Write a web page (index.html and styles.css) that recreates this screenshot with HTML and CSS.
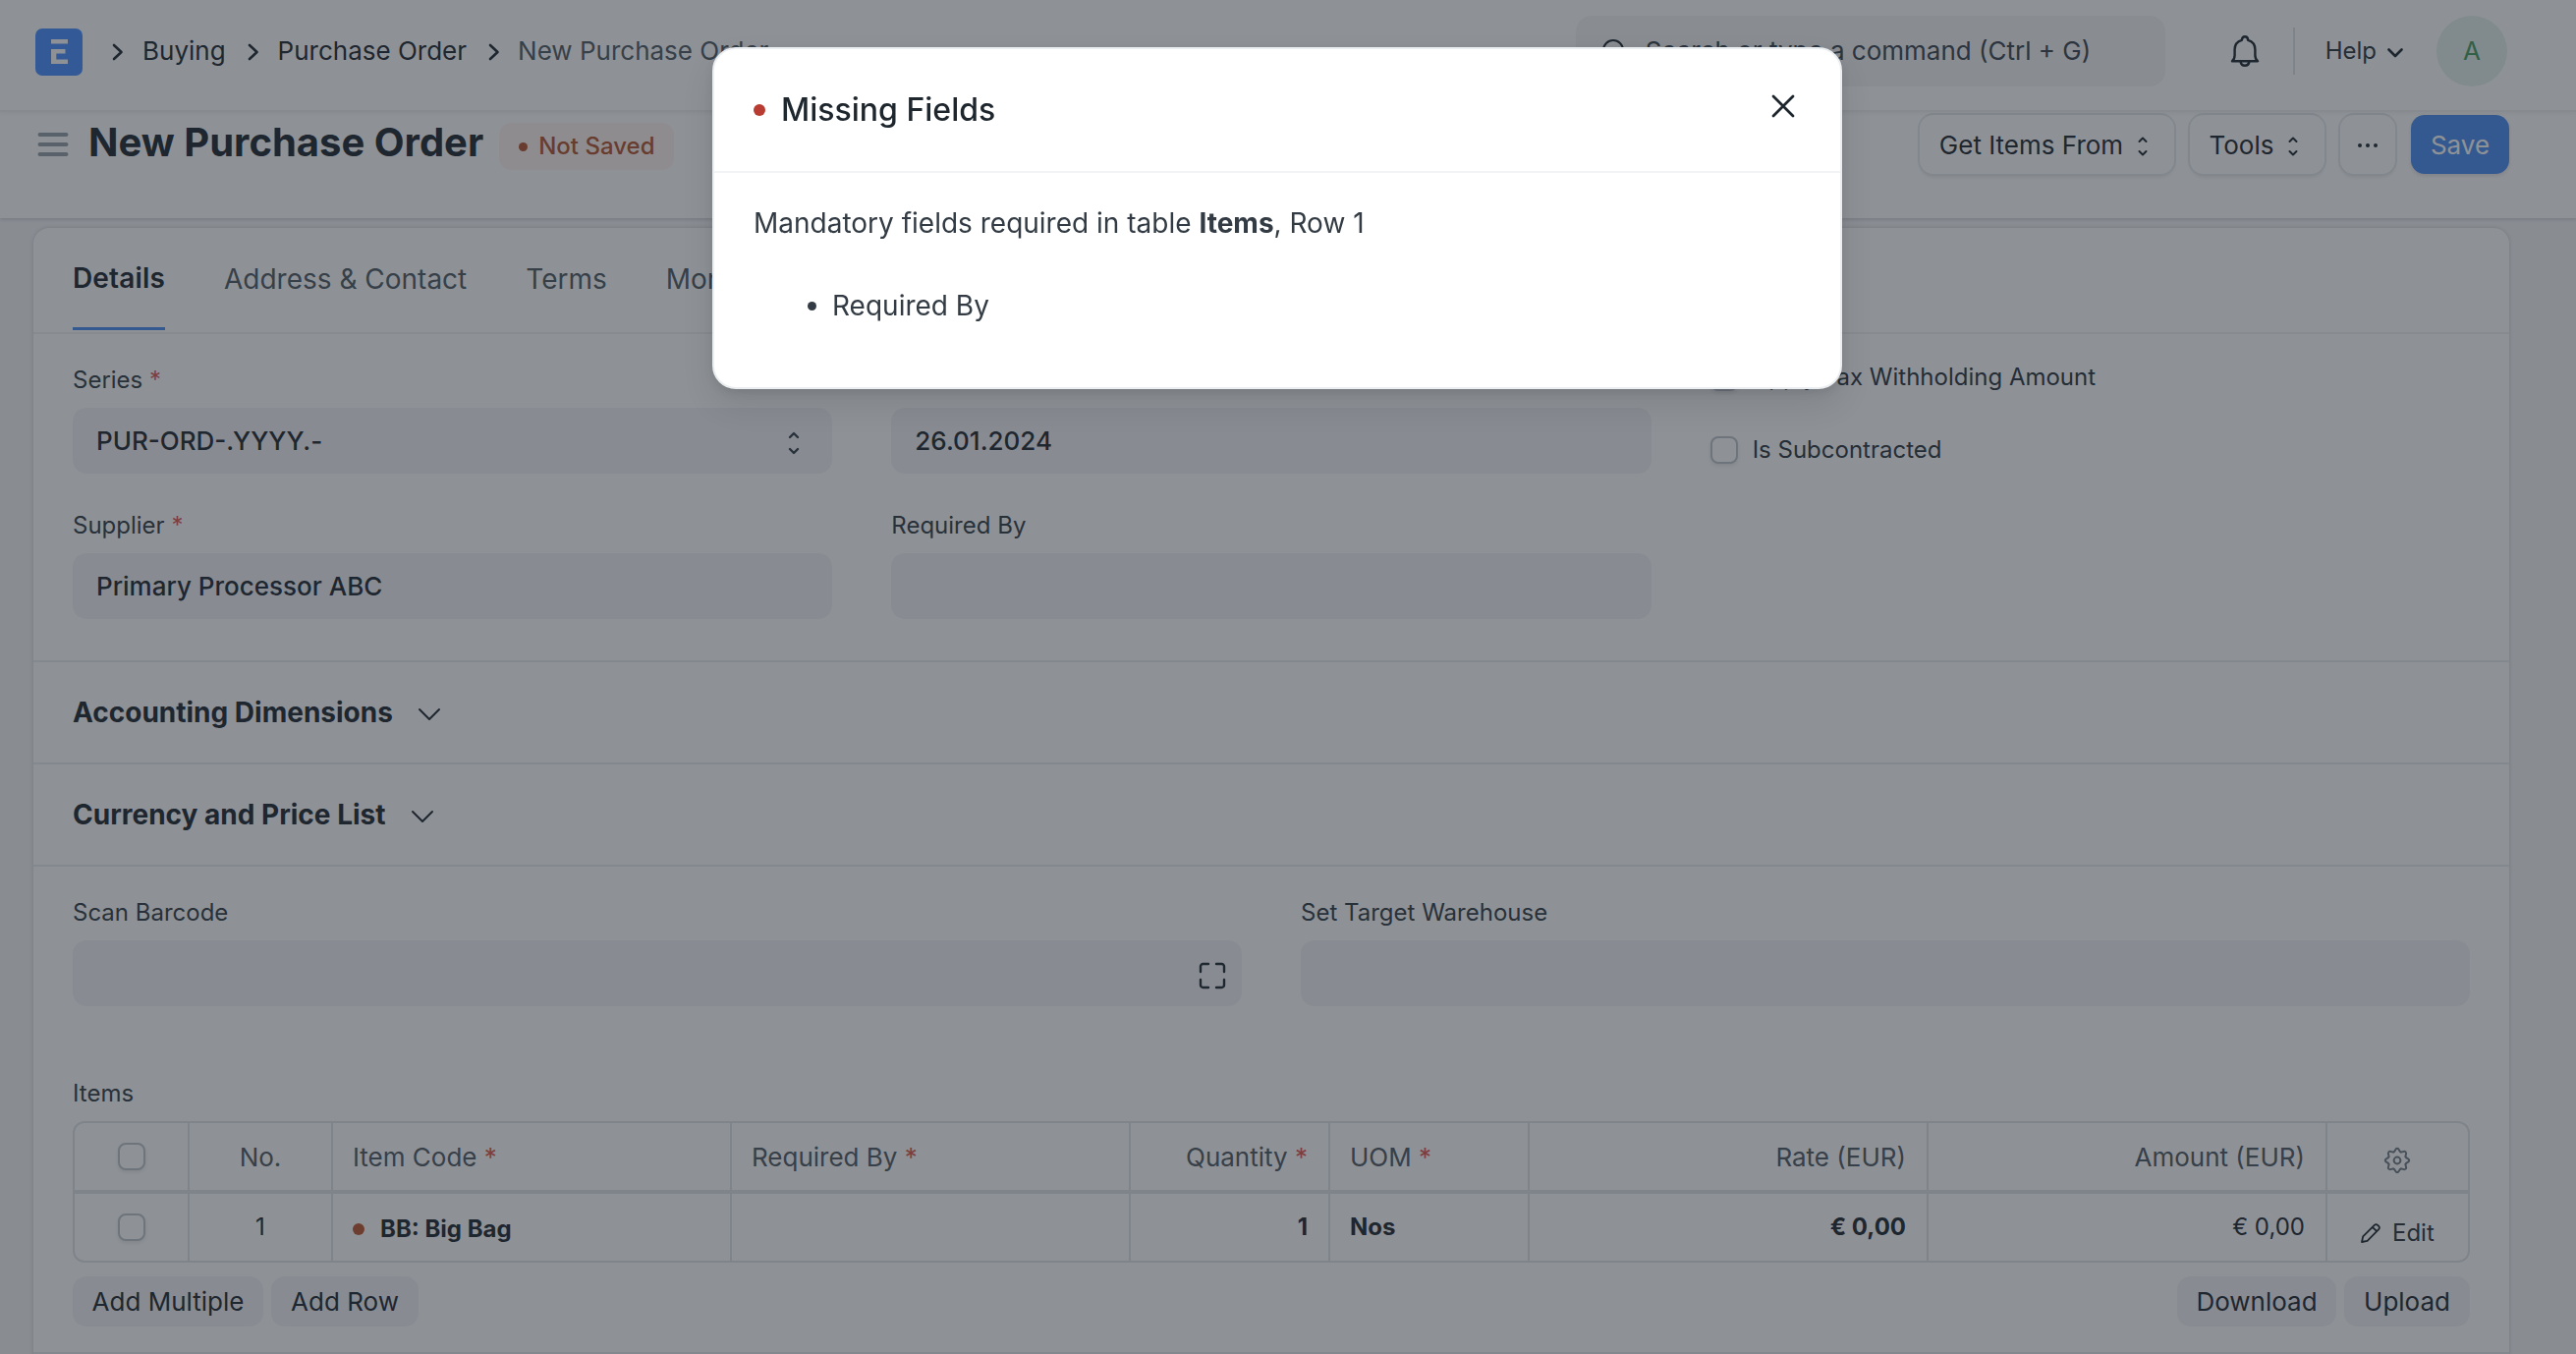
FILE: index.html
```
<!DOCTYPE html>
<html lang="en">
<head>
<meta charset="utf-8">
<title>New Purchase Order</title>
<link rel="stylesheet" href="styles.css">
</head>
<body>
<header class="navbar">
  <svg class="logo" viewBox="0 0 48 48"><rect width="48" height="48" rx="7" fill="#4a8dff"/><path d="M16 11h17v4.6H16zM16 21h14.5v4.6h-9.2v5.8H33V36H16z" fill="#fff"/></svg>
  <nav class="crumbs">
    <svg class="crumb-sep" viewBox="0 0 12 18"><path d="M2 2l7.5 7L2 16"/></svg><a>Buying</a>
    <svg class="crumb-sep" viewBox="0 0 12 18"><path d="M2 2l7.5 7L2 16"/></svg><a>Purchase Order</a>
    <svg class="crumb-sep" viewBox="0 0 12 18"><path d="M2 2l7.5 7L2 16"/></svg><a class="muted">New Purchase Order</a>
  </nav>
  <div class="search">
    <svg viewBox="0 0 26 26"><circle cx="12" cy="12" r="10"/><path d="M19 19l5 5"/></svg>
    <span>Search or type a command (Ctrl + G)</span>
  </div>
  <svg class="bell" viewBox="0 0 32 32"><path d="M3 26.2c2-1.6 2.6-3.4 2.6-6v-5.7c0-5 3-8.5 7.2-9.7C13 2.600 14.200 1.200 16 1.200s3 1.400 3.200 3.600c4.200 1.200 7.200 4.700 7.200 9.700v5.700c0 2.600.600 4.400 2.600 6zM11.500 26.500c.400 2.600 2.200 4.300 4.500 4.300s4.100-1.700 4.500-4.300"/></svg>
  <span class="nav-divider"></span>
  <span class="help">Help<svg viewBox="0 0 16 10"><path d="M1.500 1.500L8 8l6.500-6.500"/></svg></span>
  <span class="avatar">A</span>
</header>

<div class="page-head">
  <svg class="burger" viewBox="0 0 32 26"><path d="M2.500 3h27M2.500 13h27M2.500 23h27"/></svg>
  <h1>New Purchase Order</h1>
  <span class="pill"><i></i>Not Saved</span>
  <div class="actions">
    <button class="btn btn-get">Get Items From<svg class="updown" viewBox="0 0 12 24"><path d="M2.500 7L6 3.500 9.500 7M2.500 17L6 20.500 9.500 17"/></svg></button>
    <button class="btn btn-tools">Tools<svg class="updown" viewBox="0 0 12 24"><path d="M2.500 7L6 3.500 9.500 7M2.500 17L6 20.500 9.500 17"/></svg></button>
    <button class="btn btn-more"><svg class="dots" viewBox="0 0 22 6"><circle cx="3" cy="3" r="2"/><circle cx="11" cy="3" r="2"/><circle cx="19" cy="3" r="2"/></svg></button>
    <button class="btn btn-save">Save</button>
  </div>
</div>

<main class="card">
  <div class="tabs">
    <span class="tab active">Details</span>
    <span class="tab">Address &amp; Contact</span>
    <span class="tab">Terms</span>
    <span class="tab">More Info</span>
  </div>

  <section class="section general">
    <div class="column">
      <div class="field"><label>Series <b>*</b></label><div class="input">PUR-ORD-.YYYY.-<svg class="select-arrows" viewBox="0 0 14 28"><path d="M3 8l4-4 4 4M3 20l4 4 4-4"/></svg></div></div>
      <div class="field"><label>Supplier <b>*</b></label><div class="input">Primary Processor ABC</div></div>
    </div>
    <div class="column">
      <div class="field"><label>Date <b>*</b></label><div class="input">26.01.2024</div></div>
      <div class="field"><label>Required By</label><div class="input"></div></div>
    </div>
    <div class="column checks">
      <div class="check-row"><span class="checkbox"></span>Apply Tax Withholding Amount</div>
      <div class="check-row"><span class="checkbox"></span>Is Subcontracted</div>
    </div>
  </section>

  <section class="section collapsed"><h2>Accounting Dimensions</h2><svg class="chevron" viewBox="0 0 24 14"><path d="M2 2l10 10L22 2"/></svg></section>
  <section class="section collapsed"><h2>Currency and Price List</h2><svg class="chevron" viewBox="0 0 24 14"><path d="M2 2l10 10L22 2"/></svg></section>

  <section class="section items">
    <div class="pair">
      <div class="field"><label>Scan Barcode</label><div class="input scan"><svg viewBox="0 0 28 28"><path d="M2 10V4.500A2.500 2.500 0 0 1 4.500 2H10M18 2h5.500A2.500 2.500 0 0 1 26 4.500V10M26 18v5.500a2.500 2.500 0 0 1-2.500 2.500H18M10 26H4.500A2.500 2.500 0 0 1 2 23.500V18"/></svg></div></div>
      <div class="field"><label>Set Target Warehouse</label><div class="input"></div></div>
    </div>
    <label class="grid-label">Items</label>
    <div class="grid">
      <div class="row head">
        <div class="cell center"><span class="checkbox"></span></div>
        <div class="cell center">No.</div>
        <div class="cell">Item Code <b>*</b></div>
        <div class="cell">Required By <b>*</b></div>
        <div class="cell right">Quantity <b>*</b></div>
        <div class="cell">UOM <b>*</b></div>
        <div class="cell right">Rate (EUR)</div>
        <div class="cell right">Amount (EUR)</div>
        <div class="cell center"><svg class="gear" viewBox="-14 -14 28 28"><defs><path id="tooth" d="M-3.560-8.590C-1.600-9.400-2.400-12.200 0-12.200S1.600-9.400 3.560-8.590"/></defs><use href="#tooth"/><use href="#tooth" transform="rotate(45)"/><use href="#tooth" transform="rotate(90)"/><use href="#tooth" transform="rotate(135)"/><use href="#tooth" transform="rotate(180)"/><use href="#tooth" transform="rotate(225)"/><use href="#tooth" transform="rotate(270)"/><use href="#tooth" transform="rotate(315)"/><circle r="3.400"/></svg></div>
      </div>
      <div class="row data">
        <div class="cell center"><span class="checkbox"></span></div>
        <div class="cell center">1</div>
        <div class="cell strong item"><i></i>BB: Big Bag</div>
        <div class="cell"></div>
        <div class="cell strong right">1</div>
        <div class="cell strong">Nos</div>
        <div class="cell strong right">€ 0,00</div>
        <div class="cell right">€ 0,00</div>
        <div class="cell edit"><svg viewBox="0 0 22 22"><path d="M2 20l1.200-5.600L14.800 2.800a2.300 2.300 0 0 1 3.300 0l1.100 1.100a2.300 2.300 0 0 1 0 3.300L7.600 18.800zM12.800 4.800l4.400 4.400"/></svg>Edit</div>
      </div>
    </div>
    <div class="grid-buttons">
      <button class="soft add-multiple">Add Multiple</button>
      <button class="soft add-row">Add Row</button>
      <button class="soft download">Download</button>
      <button class="soft upload">Upload</button>
    </div>
  </section>
</main>

<div class="backdrop"></div>
<div class="dialog">
  <div class="dialog-head">
    <i></i><h3>Missing Fields</h3>
    <svg class="close" viewBox="0 0 24 24"><path d="M2 2l20 20M22 2L2 22"/></svg>
  </div>
  <div class="dialog-body">
    <p>Mandatory fields required in table <strong>Items</strong>, Row 1</p>
    <ul><li>Required By</li></ul>
  </div>
</div>
</body>
</html>
```
FILE: styles.css
```
* { box-sizing: border-box; }
html, body { height: 1378px; overflow: hidden; }
body {
  margin: 0;
  background: #f4f4f5;
  color: #1f272e;
  font: 26px/30px Inter, "Liberation Sans", sans-serif;
}
svg { fill: none; stroke: #1f272e; stroke-width: 2; stroke-linecap: round; stroke-linejoin: round; flex: none; }
h1, h2, h3, p, ul { margin: 0; padding: 0; }
button { border: 0; font: inherit; color: inherit; padding: 0; }
label b, .cell b { font-weight: 400; color: #e0564d; }

/* Navbar */
.navbar {
  position: relative;
  display: flex;
  align-items: center;
  height: 114px;
  padding: 0 70px 8px 36px;
  background: #fff;
  border-bottom: 2px solid #f0f0f1;
  box-shadow: 0 2px 4px rgba(0, 0, 0, .05);
}
.logo { width: 48px; height: 48px; stroke: none; margin-top: 2px; }
.crumbs { display: flex; align-items: center; margin-left: 30px; }
.crumbs a { margin: 0 22px 0 1px; white-space: nowrap; }
.crumbs .muted { color: #505a62; margin: 0; }
.crumb-sep { width: 12px; height: 18px; margin: 2px 18px 0 0; stroke-width: 2.600; }
.search {
  display: flex;
  align-items: center;
  width: 600px;
  height: 72px;
  margin-left: auto;
  padding-left: 26px;
  border-radius: 16px;
  background: #f4f4f5;
  color: #3a454e;
}
.search svg { width: 26px; height: 26px; margin-right: 19px; }
.bell { width: 32px; height: 32px; margin-left: 65px; stroke-width: 2.400; }
.nav-divider { width: 2px; height: 48px; margin: 0 31px 0 33px; background: #dfe1e4; }
.help { display: flex; align-items: center; font-size: 24px; color: #2c353d; }
.help svg { width: 16px; height: 10px; margin: 3px 0 0 11px; stroke-width: 2.600; }
.avatar {
  width: 72px;
  margin-left: 34px;
  border-radius: 50%;
  background: #e4f0ea;
  color: #479a5f;
  line-height: 72px;
  text-align: center;
}

/* Page header */
.page-head {
  display: flex;
  height: 108px;
  padding: 0 68px 0 38px;
  background: #fff;
  box-shadow: 0 2px 3px rgba(0, 0, 0, .12);
}
.burger { width: 32px; height: 26px; margin: 20px 20px 0 0; stroke: #949da5; stroke-width: 4; }
h1 { font-size: 40px; line-height: 48px; margin-top: 7px; }
.pill {
  display: flex;
  align-items: center;
  height: 48px;
  margin: 11px 0 0 16px;
  padding: 0 20px;
  border-radius: 12px;
  background: #fff3ee;
  color: #b2532e;
  font-size: 24px;
  font-weight: 500;
}
.pill i { width: 9px; height: 9px; margin-right: 11px; border-radius: 50%; background: #b2532e; }
.actions { display: flex; gap: 16px; margin: 3px 0 0 auto; }
.btn {
  display: flex;
  align-items: center;
  justify-content: center;
  height: 60px;
  padding-top: 1px;
  border-radius: 14px;
  background: #fff;
  box-shadow: 0 0 0 2px #e7e9eb, 0 3px 4px rgba(0, 0, 0, .1);
}
.btn-get { width: 259px; }
.btn-tools { width: 137px; }
.btn-more { width: 56px; }
.btn-save { width: 100px; background: #4b8bf0; color: #fff; box-shadow: 0 2px 4px rgba(0, 0, 0, .12); }
.updown { width: 12px; height: 24px; margin: 2px 6px 0 14px; }
.dots { width: 22px; height: 6px; fill: #1f272e; stroke: none; }

/* Form card */
.card {
  width: 2520px;
  height: 1200px;
  margin: 10px 0 0 34px;
  border-radius: 16px;
  background: #fff;
  box-shadow: 0 0 4px rgba(0, 0, 0, .16);
}
.tabs {
  display: flex;
  gap: 60px;
  height: 108px;
  padding: 0 40px;
  border-bottom: 2px solid #f0f0f1;
  color: #505a62;
  font-size: 28px;
}
.tab { height: 104px; line-height: 104px; }
.tab.active { border-bottom: 3px solid #4b8bf0; color: #1f272e; font-weight: 600; line-height: 103px; letter-spacing: .15px; }
.section { padding: 0 40px; border-bottom: 2px solid #e9eaec; }
.general { display: grid; grid-template-columns: repeat(3, 1fr); gap: 60px; height: 334px; padding-top: 32px; }
.field { margin-bottom: 37px; }
label { display: block; margin-bottom: 14px; font-size: 24px; color: #333c44; }
.field label { margin-bottom: 13px; }
.general .field { margin-bottom: 38px; }
.input {
  display: flex;
  align-items: center;
  justify-content: space-between;
  height: 67px;
  padding: 1px 24px 0;
  border-radius: 14px;
  background: #f3f3f4;
  font-weight: 450;
}
.select-arrows { width: 14px; height: 28px; margin: 4px 8px 0 0; stroke: #333c44; stroke-width: 2.400; }
.checks { margin-top: -2px; }
.check-row { display: flex; align-items: center; height: 28px; margin-bottom: 46px; gap: 15px; font-size: 24px; color: #2c353d; }
.checkbox { width: 28px; height: 28px; border: 2px solid #bcc2c8; border-radius: 8px; background: #fff; box-shadow: 0 2px 4px rgba(0, 0, 0, .1); }
.collapsed { display: flex; align-items: center; height: 104px; }
h2 { font-size: 28px; }
.chevron { width: 24px; height: 14px; margin: 3px 0 0 25px; }

/* Items */
.items { height: 496px; padding-top: 32px; }
.pair { display: grid; grid-template-columns: 1fr 1fr; gap: 60px; }
.pair .field { margin-bottom: 74px; }
.grid-label { margin-bottom: 13px; }
.scan { padding-right: 16px; }
.scan svg { width: 28px; height: 28px; margin: 3px 0 0 auto; stroke-width: 2.400; }
.grid { border: 2px solid #e0e2e4; border-radius: 12px; overflow: hidden; }
.row { display: grid; grid-template-columns: 117px 146px 406px 406px 203px 203px 406px 406px 1fr; height: 68px; }
.head { height: 72px; border-bottom: 4px solid #e0e2e4; color: #505a62; }
.head .cell { padding-top: 2px; }
.head .checkbox { margin-top: -2px; }
.data { font-size: 24px; }
.cell { display: flex; align-items: center; padding: 0 20px; border-right: 2px solid #e0e2e4; white-space: pre; }
.cell:last-child { border-right: 0; }
.center { justify-content: center; }
.right { justify-content: flex-end; padding-right: 21px; }
.strong { font-weight: 700; }
.item { padding-top: 4px; }
.item i { width: 12px; height: 12px; margin: 0 16px 0 0; border-radius: 50%; background: #bd5430; }
.gear { width: 28px; height: 28px; margin: 5px 2px 0 0; stroke: #737b83; }
.edit { padding: 11px 0 0 33px; color: #2c353d; }
.edit svg { width: 22px; height: 22px; margin-right: 11px; stroke-width: 1.800; }
.grid-buttons { display: flex; gap: 8px; margin-top: 14px; }
.soft { height: 51px; border-radius: 14px; background: #f3f3f4; }
.add-multiple { width: 194px; }
.add-row { width: 150px; }
.download { width: 162px; margin-left: auto; }
.upload { width: 128px; }

/* Message dialog */
.backdrop { position: fixed; inset: 0; background: #1e252f; opacity: .5; }
.dialog {
  position: fixed;
  top: 48px;
  left: 725px;
  width: 1150px;
  height: 348px;
  border: 2px solid #ebeef0;
  border-radius: 24px;
  background: #fff;
  box-shadow: 0 16px 32px rgba(0, 0, 0, .1), 0 4px 8px rgba(0, 0, 0, .08);
}
.dialog-head { display: flex; align-items: center; height: 126px; padding: 0 46px 0 40px; border-bottom: 2px solid #f2f3f5; }
.dialog-head i { width: 12px; height: 12px; margin-right: 16px; border-radius: 50%; background: #b83c32; }
h3 { font-size: 32px; font-weight: 500; }
.close { width: 24px; height: 24px; margin: -8px 0 0 auto; stroke-width: 2.800; }
.dialog-body { padding: 30px 40px; font-size: 28px; line-height: 42px; color: #333c44; }
.dialog-body ul { margin-top: 42px; padding-left: 80px; }
```
